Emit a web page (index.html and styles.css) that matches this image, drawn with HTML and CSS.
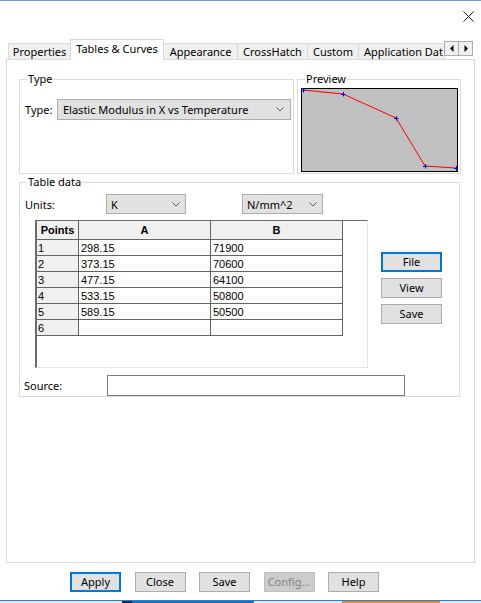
FILE: index.html
```html
<!DOCTYPE html>
<html>
<head>
<meta charset="utf-8">
<title>Material</title>
<link rel="stylesheet" href="styles.css">
</head>
<body>
<div class="window">
  <div class="titlebar">
    <svg class="close" width="11" height="11" viewBox="0 0 11 11"><path d="M0.5 0.5 L10.5 10.5 M10.5 0.5 L0.5 10.5" stroke="#1a1a1a" stroke-width="1" fill="none"/></svg>
  </div>
  <div class="tabs">
    <div class="tab t-props">Properties</div>
    <div class="tab active t-tables">Tables &amp; Curves</div>
    <div class="tab t-app">Appearance</div>
    <div class="tab t-cross">CrossHatch</div>
    <div class="tab t-custom">Custom</div>
    <div class="tab t-appdata">Application Dat</div>
    <div class="tab-scroll">
      <div class="arrow-btn"><svg width="4" height="7" viewBox="0 0 4 7"><path d="M3.5 0 L0 3.5 L3.5 7 Z" fill="#000"/></svg></div>
      <div class="arrow-btn"><svg width="4" height="7" viewBox="0 0 4 7"><path d="M0.5 0 L4 3.5 L0.5 7 Z" fill="#000"/></svg></div>
    </div>
  </div>
  <div class="pane">
    <div class="top-row">
      <fieldset class="group g-type">
        <legend>Type</legend>
        <div class="type-row">
          <span class="lbl-type">Type:</span>
          <div class="combo combo-type"><span>Elastic Modulus in X vs Temperature</span><svg width="8" height="5" viewBox="0 0 8 5"><path d="M0.5 0.5 L4 4 L7.5 0.5" stroke="#606060" fill="none"/></svg></div>
        </div>
      </fieldset>
      <fieldset class="group g-preview">
        <legend>Preview</legend>
        <svg class="preview" width="157" height="84" viewBox="0 0 157 84">
          <rect x="0.5" y="0.5" width="156" height="83" fill="#c0c0c0" stroke="#000"/>
          <polyline points="2,2 42,6 95,30 124,78 155,80" fill="none" stroke="#ff0000" stroke-width="1"/>
          <g stroke="#0000ff" stroke-width="1" fill="none">
            <path d="M0 2.5 h4.5 M2.5 0 v4.5"/>
            <path d="M40 6.5 h4.5 M42.5 4 v4.5"/>
            <path d="M93 30.5 h4.5 M95.5 28 v4.5"/>
            <path d="M122 78.5 h4.5 M124.5 76 v4.5"/>
            <path d="M153 80.5 h4 M155.5 78 v4.5"/>
          </g>
        </svg>
      </fieldset>
    </div>
    <fieldset class="group g-table">
      <legend>Table data</legend>
      <div class="units-row">
        <span class="lbl-units">Units:</span>
        <div class="combo combo-k"><span>K</span><svg width="8" height="5" viewBox="0 0 8 5"><path d="M0.5 0.5 L4 4 L7.5 0.5" stroke="#606060" fill="none"/></svg></div>
        <div class="combo combo-n"><span>N/mm^2</span><svg width="8" height="5" viewBox="0 0 8 5"><path d="M0.5 0.5 L4 4 L7.5 0.5" stroke="#606060" fill="none"/></svg></div>
      </div>
      <div class="grid-row">
        <div class="grid">
          <table class="data">
            <thead>
              <tr><th class="c-pt">Points</th><th class="c-a">A</th><th class="c-b">B</th></tr>
            </thead>
            <tbody>
              <tr><td class="pt">1</td><td>298.15</td><td>71900</td></tr>
              <tr><td class="pt">2</td><td>373.15</td><td>70600</td></tr>
              <tr><td class="pt">3</td><td>477.15</td><td>64100</td></tr>
              <tr><td class="pt">4</td><td>533.15</td><td>50800</td></tr>
              <tr><td class="pt">5</td><td>589.15</td><td>50500</td></tr>
              <tr><td class="pt">6</td><td></td><td></td></tr>
            </tbody>
          </table>
        </div>
        <div class="side-buttons">
          <div class="btn side default">File</div>
          <div class="btn side">View</div>
          <div class="btn side">Save</div>
        </div>
      </div>
      <div class="source-row">
        <span class="lbl-source">Source:</span>
        <div class="input-source"></div>
      </div>
    </fieldset>
  </div>
  <div class="footer">
    <div class="btn foot default">Apply</div>
    <div class="btn foot">Close</div>
    <div class="btn foot">Save</div>
    <div class="btn foot disabled">Config...</div>
    <div class="btn foot">Help</div>
  </div>
  <div class="taskbar">
    <div class="seg s1"></div>
    <div class="seg s2"></div>
    <div class="seg s3"></div>
    <div class="seg s4"></div>
    <div class="seg s5"></div>
    <div class="seg s6"></div>
    <div class="seg s7"></div>
  </div>
</div>
</body>
</html>
```
FILE: styles.css
```css
* { box-sizing: border-box; }
html, body { margin: 0; padding: 0; }
body {
  width: 481px;
  height: 603px;
  overflow: hidden;
  background: #ffffff;
  font-family: "Noto Sans", "Open Sans", sans-serif;
  font-size: 11px;
  color: #000;
}
.window {
  height: 603px;
  border-top: 1px solid #6e9fd6;
  display: flex;
  flex-direction: column;
}
.titlebar {
  height: 38px;
  display: flex;
  justify-content: flex-end;
  align-items: flex-start;
}
.close { display: block; margin-top: 10px; margin-right: 7px; }

/* tabs */
.tabs {
  display: flex;
  align-items: flex-end;
  height: 20px;
  margin-left: 8px;
}
.tab {
  height: 16px;
  border: 1px solid #d9d9d9;
  border-bottom: none;
  background: #f0f0f0;
  line-height: 15px;
  text-align: center;
  white-space: nowrap;
  overflow: hidden;
  margin-right: -1px;
}
.tab.active {
  height: 21px;
  margin-bottom: -1px;
  background: #fff;
  line-height: 18px;
  position: relative;
  z-index: 1;
}
.t-props { width: 63px; }
.t-tables { width: 94px; }
.t-app { width: 75px; }
.t-cross { width: 71px; }
.t-custom { width: 52px; }
.t-appdata { width: 87px; text-align: left; padding-left: 5px; }
.tab-scroll {
  display: flex;
  align-self: flex-start;
  margin-top: 2px;
  position: relative;
  z-index: 2;
}
.arrow-btn {
  width: 15px;
  height: 15px;
  border: 1px solid #adadad;
  background: #f0f0f0;
  display: flex;
  align-items: center;
  justify-content: center;
  margin-right: -1px;
}
.arrow-btn svg { display: block; }

/* pane */
.pane {
  margin-left: 6px;
  width: 469px;
  height: 504px;
  border: 1px solid #d9d9d9;
  padding: 11px 0 0 12px;
  background: #fff;
}
.top-row { display: flex; gap: 3px; }
fieldset.group {
  margin: 0;
  padding: 0;
  border: 1px solid #dcdcdc;
  min-width: 0;
}
fieldset.group legend {
  margin-left: 7px;
  padding: 0 1px;
  line-height: 16px;
}
.g-type { width: 275px; }
.g-preview { width: 164px; }
.type-row {
  margin-top: 12px;
  display: flex;
  align-items: center;
  padding-left: 5px;
}
.lbl-type { width: 32px; }
.combo {
  display: flex;
  align-items: center;
  justify-content: space-between;
  background: #e1e1e1;
  border: 1px solid #adadad;
  padding: 0 5px 0 4px;
  white-space: nowrap;
}
.combo svg { display: block; flex: none; }
.combo-type { width: 234px; height: 21px; padding-left: 5px; padding-right: 6px; }
.preview { display: block; margin: 1px 0 1px 3px; }

.g-table { width: 441px; margin-top: 1px; margin-left: 1px; }
.units-row {
  margin-top: 4px;
  display: flex;
  align-items: center;
  padding-left: 5px;
}
.lbl-units { width: 81px; }
.combo-k { width: 80px; height: 20px; }
.combo-n { width: 81px; height: 20px; margin-left: 56px; }

.grid-row {
  margin-top: 6px;
  display: flex;
  align-items: flex-start;
  padding-left: 15px;
}
.grid {
  width: 333px;
  height: 148px;
  border-left: 2px solid #6b6b6b;
  border-top: 1px solid #6b6b6b;
  border-right: 1px solid #e3e3e3;
  border-bottom: 1px solid #e3e3e3;
  background: #fff;
}
table.data {
  border-collapse: separate;
  border-spacing: 0;
  table-layout: fixed;
  width: 306px;
  font-family: "Liberation Sans", Arial, sans-serif;
  font-size: 11px;
}
table.data th,
table.data td {
  border-right: 1px solid #646464;
  border-bottom: 1px solid #646464;
  padding: 0 0 0 2px;
  text-align: left;
  white-space: nowrap;
}
table.data th {
  height: 19px;
  background: #f0f0f0;
  font-weight: bold;
  text-align: center;
  padding: 0;
}
table.data td { height: 16px; line-height: 14px; }
table.data td.pt { background: #f0f0f0; padding-left: 1px; }
.c-pt { width: 42px; }
.c-a { width: 132px; }
.c-b { width: 132px; }

.side-buttons {
  margin-left: 13px;
  margin-top: 32px;
  display: flex;
  flex-direction: column;
  gap: 6px;
}
.btn {
  height: 20px;
  border: 1px solid #adadad;
  background: #e1e1e1;
  text-align: center;
  line-height: 18px;
}
.btn.default { border: 2px solid #0078d7; line-height: 16px; }
.btn.side { width: 61px; }

.source-row {
  margin-top: 7px;
  display: flex;
  align-items: center;
  padding-left: 4px;
}
.lbl-source { width: 83px; }
.input-source {
  width: 298px;
  height: 21px;
  border: 1px solid #7a7a7a;
  background: #fff;
}

/* footer */
.footer {
  margin-top: 9px;
  display: flex;
  gap: 13.5px;
  padding-left: 70px;
}
.btn.foot { width: 51px; }
.btn.disabled { background: #cccccc; border-color: #bfbfbf; color: #838383; }

/* taskbar sliver */
.taskbar {
  margin-top: auto;
  height: 3px;
  border-top: 1px solid #2b7fd4;
  display: flex;
}
.seg { height: 2px; }
.s1 { width: 122px; background: #dbe7f3; }
.s2 { width: 10px; background: #1a2a5a; }
.s3 { width: 122px; background: #1f6fbe; }
.s4 { width: 6px; background: #e9eff6; }
.s5 { width: 82px; background: #dfe8f2; }
.s6 { width: 98px; background: #d98b3c; }
.s7 { flex: 1; background: #dbe7f3; }
```
